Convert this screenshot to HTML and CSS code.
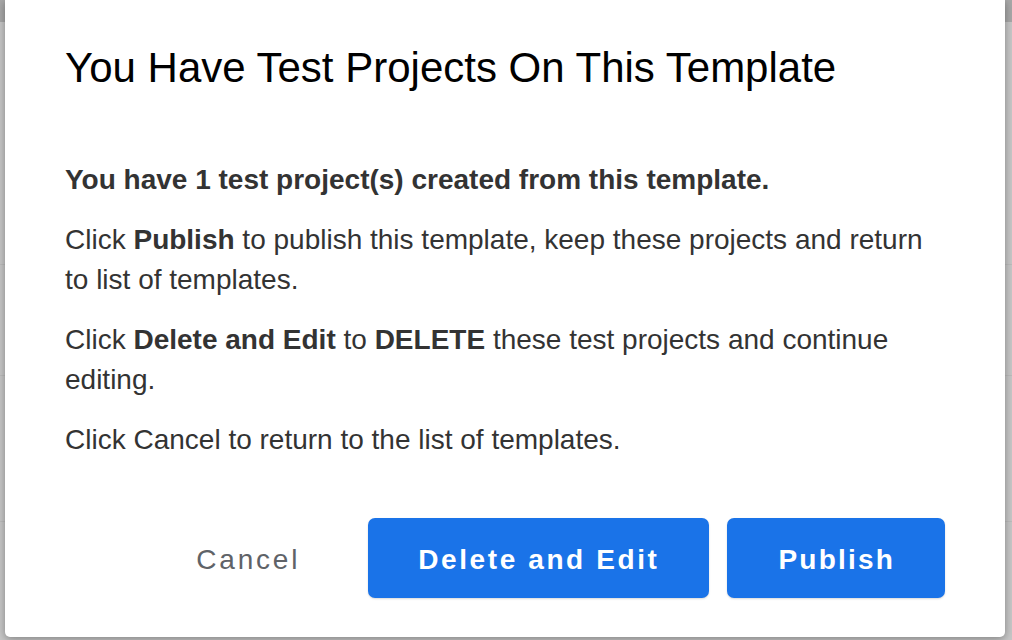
FILE: index.html
```html
<!DOCTYPE html>
<html>
<head>
<meta charset="utf-8">
<link rel="stylesheet" href="styles.css">
</head>
<body>
<div class="page">
  <div class="modal">
    <h1 class="title">You Have Test Projects On This Template</h1>
    <div class="content">
      <p class="para"><b>You have 1 test project(s) created from this template.</b></p>
      <p class="para">Click <b>Publish</b> to publish this template, keep these projects and return to list of templates.</p>
      <p class="para">Click <b>Delete and Edit</b> to <b>DELETE</b> these test projects and continue editing.</p>
      <p class="para">Click Cancel to return to the list of templates.</p>
    </div>
    <div class="actions">
      <button class="btn btn-text">Cancel</button>
      <button class="btn btn-primary">Delete and Edit</button>
      <button class="btn btn-primary btn-narrow">Publish</button>
    </div>
  </div>
</div>
</body>
</html>
```
FILE: styles.css
```css
html, body {
  margin: 0;
  padding: 0;
}
body {
  width: 1012px;
  height: 640px;
  overflow: hidden;
  background:
    linear-gradient(#a8a8a8, #a8a8a8) 0 0 / 100% 22px no-repeat,
    linear-gradient(#bcbcbc, #bcbcbc) 0 264px / 100% 1px no-repeat,
    linear-gradient(#bcbcbc, #bcbcbc) 0 375px / 100% 1px no-repeat,
    linear-gradient(#bcbcbc, #bcbcbc) 0 521px / 100% 1px no-repeat,
    #c7c7c7;
  font-family: "Liberation Sans", Arial, Helvetica, sans-serif;
}
.page {
  padding: 0 7px 0 5px;
}
.modal {
  background: #fff;
  height: 637px;
  box-sizing: border-box;
  padding: 44px 60px 39px 60px;
  border-radius: 0 0 5px 5px;
  box-shadow: 0 2px 8px rgba(0, 0, 0, 0.35);
  display: flex;
  flex-direction: column;
}
.title {
  margin: 0;
  font-size: 42px;
  line-height: 48px;
  font-weight: normal;
  color: #000;
}
.content {
  margin-top: 68px;
  display: flex;
  flex-direction: column;
  gap: 20px;
}
.para {
  margin: 0;
  font-size: 28px;
  line-height: 40px;
  color: #333;
}
.para b {
  color: #333;
}
.actions {
  margin-top: auto;
  display: flex;
  justify-content: flex-end;
  gap: 18px;
}
.btn {
  height: 80px;
  padding: 3px 50px 0 50px;
  border: none;
  border-radius: 7px;
  font-family: "Liberation Sans", Arial, Helvetica, sans-serif;
  font-size: 28px;
  letter-spacing: 2.4px;
  cursor: pointer;
}
.btn-text {
  background: transparent;
  color: #5f6368;
  font-weight: normal;
  letter-spacing: 2.8px;
}
.btn-primary {
  background: #1a73e8;
  color: #fff;
  font-weight: bold;
  letter-spacing: 2.6px;
  box-shadow: 0 1px 2px rgba(0, 0, 0, 0.15);
}
.btn-narrow {
  letter-spacing: 2.2px;
  padding: 3px 50px 0 51px;
}
```
